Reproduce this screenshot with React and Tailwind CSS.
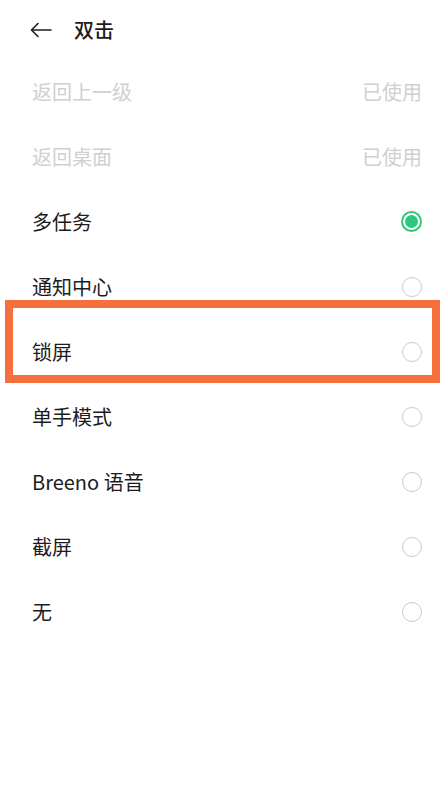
import React from "react";

const FONT = { fontFamily: '"Noto Sans CJK SC", "Noto Sans", sans-serif' };

const items = [
  { label: "返回上一级", used: true },
  { label: "返回桌面", used: true },
  { label: "多任务", checked: true },
  { label: "通知中心" },
  { label: "锁屏" },
  { label: "单手模式" },
  { label: "Breeno 语音" },
  { label: "截屏" },
  { label: "无" },
];

const Radio = ({ checked }) =>
  checked ? (
    <span className="flex h-[21px] w-[21px] items-center justify-center rounded-full border-2 border-[#2fc77e]">
      <span className="block h-[13px] w-[13px] rounded-full bg-[#2fc77e]" />
    </span>
  ) : (
    <span className="block h-[20px] w-[20px] rounded-full border-[1.5px] border-[#c9c9c9]" />
  );

export default function App() {
  return (
    <div className="relative h-[796px] w-[448px] overflow-hidden bg-white text-[#1c1c1c]" style={FONT}>
      {/* 顶栏 */}
      <div className="flex h-[59px] items-center pl-[30px] pt-[1px]">
        <svg width="22" height="16" viewBox="0 0 22 16" fill="none" stroke="#1c1c1c" strokeWidth="1.6" strokeLinecap="round" strokeLinejoin="round">
          <path d="M21 8H2" />
          <path d="M8 1.5L1.5 8L8 14.5" />
        </svg>
        <span className="ml-[22px] text-[20px] font-medium leading-none">双击</span>
      </div>

      {/* 列表 */}
      <div>
        {items.map((it) => (
          <div key={it.label} className="flex h-[65px] items-center justify-between pl-[32px] pr-[26px]">
            <span className={`text-[20px] leading-none ${it.used ? "text-[#d0d0d0]" : ""}`}>{it.label}</span>
            {it.used ? (
              <span className="text-[20px] leading-none text-[#d0d0d0]">已使用</span>
            ) : (
              <span className="flex w-[21px] justify-center">
                <Radio checked={it.checked} />
              </span>
            )}
          </div>
        ))}
      </div>

      {/* 标注框 */}
      <div className="pointer-events-none absolute left-[5px] top-[300px] h-[83px] w-[435px] border-[8px] border-[#f4703f]" />
    </div>
  );
}
